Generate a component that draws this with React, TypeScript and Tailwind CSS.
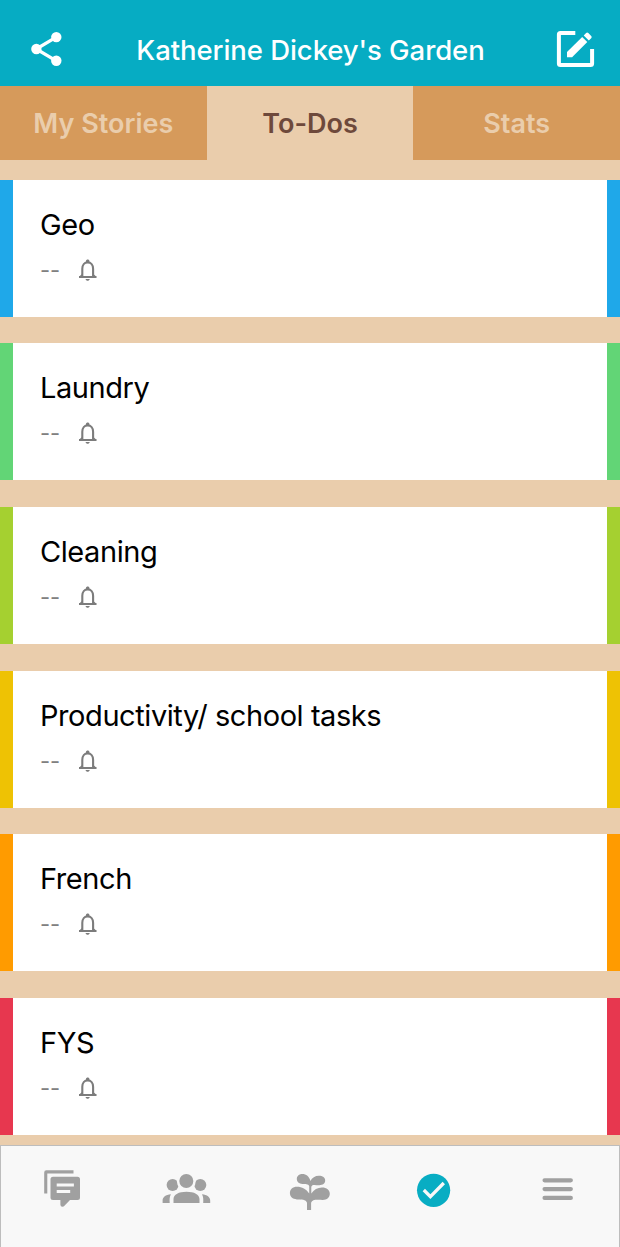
const todos = [
  { title: 'Geo', border: 'border-[#1fa8e9]' },
  { title: 'Laundry', border: 'border-[#62d576]' },
  { title: 'Cleaning', border: 'border-[#a5d030]' },
  { title: 'Productivity/ school tasks', border: 'border-[#eec204]' },
  { title: 'French', border: 'border-[#ff9b00]' },
  { title: 'FYS', border: 'border-[#e7374f]' },
];

function ShareIcon() {
  return (
    <svg className="h-[40px] w-[40px]" viewBox="26 29 40 40" fill="#fff">
      <path d="M56.3 37.1 36.2 49l20.1 11.8" fill="none" stroke="#fff" strokeWidth="3.3" />
      <circle cx="56.3" cy="37.1" r="5.2" />
      <circle cx="36.4" cy="49" r="5.2" />
      <circle cx="56.3" cy="60.7" r="5.2" />
    </svg>
  );
}

function EditIcon() {
  return (
    <svg className="h-[40px] w-[40px]" viewBox="555 29 40 40" fill="#fff">
      <path
        d="M575.3 32.9H560.5q-1.6 0-1.6 1.6v29q0 1.6 1.6 1.6h30q1.6 0 1.6-1.6V49"
        fill="none"
        stroke="#fff"
        strokeWidth="4"
      />
      <path d="M567 52.1 582.2 37l5.1 5.1L572.1 57.2H567z" />
      <path d="m583.7 35.5 2.4-2.4q1.1-1.1 2.2 0l2.9 2.9q1.1 1.1 0 2.2l-2.4 2.4z" />
    </svg>
  );
}

function BellIcon() {
  return (
    <svg className="h-[24px] w-[20px]" viewBox="78 258 20 24">
      <path
        d="M79 277h17.4M82.3 276.5v-7.7c0-3.8 2.2-6.4 5.4-6.4s5.4 2.6 5.4 6.4v7.7"
        fill="none"
        stroke="#7c7c7c"
        strokeWidth="2.1"
      />
      <path
        d="M86 262v-1c0-2 3.4-2 3.4 0v1zM82.3 273.7l-3.3 3v.8h3.5zM93.1 273.7l3.3 3v.8H93zM85.5 279h4.3c-.6 2.4-3.7 2.4-4.3 0z"
        fill="#7c7c7c"
      />
    </svg>
  );
}

function ChatIcon() {
  return (
    <svg className="h-[40px] w-[40px]" viewBox="42 1169 40 40" fill="#a0a0a0">
      <path d="M44.2 1193.5v-21q0-2.2 2.2-2.2h27.1v3.1H47.3v20.1z" />
      <path
        fillRule="evenodd"
        d="M53 1176.8h24.5q2.5 0 2.5 2.5v18.2q0 2.5-2.5 2.5H70l-5.3 5.5q-1 1.2-2.3 1.2-2 0-2-2v-4.7H53q-2.5 0-2.5-2.5v-18.2q0-2.5 2.5-2.5zM56.7 1183.6v3h17.2v-3zm0 6.4v3h13.5v-3z"
      />
    </svg>
  );
}

function PeopleIcon() {
  return (
    <svg className="h-[40px] w-[50px]" viewBox="161 1169 50 40" fill="#a0a0a0">
      <circle cx="172.6" cy="1185" r="6" />
      <circle cx="200.3" cy="1185" r="6" />
      <circle cx="186.3" cy="1181" r="7" stroke="#f8f8f8" strokeWidth="5" paintOrder="stroke" />
      <path d="M173.5 1202.9v-3.8c0-4.5 5.3-7.3 13-7.3s13 2.8 13 7.3v3.8zM162.6 1202.9v-2.3c0-3.6 3-6 8.3-6.4-1.4 2.3-1.4 5.6-1.2 8.7zM210.2 1202.9v-2.3c0-3.6-3-6-8.2-6.4 1.4 2.3 1.4 5.6 1.2 8.7z" />
    </svg>
  );
}

function PlantIcon() {
  return (
    <svg className="h-[40px] w-[44px]" viewBox="288 1172 44 40" fill="#a0a0a0">
      <path d="M310.4 1180.9c1.7-3.2 4.7-5.2 8.4-5.2 3.9 0 6.4 1.9 6.4 4.9 0 2.8-2.4 4.7-5.9 4.7-3.4 0-7-1.5-8 1.4v6.7c2.6-3.7 6.2-5.9 10.7-5.9 4.7 0 7.8 2.5 7.8 6.3 0 3.7-2.8 6.1-7 6.1-5.4 0-10.5-1-11.7 2.8v7.3h-4.1v-7.3c-.9-3.6-5.8-3.1-10.1-3.3-4.3-.2-7-2.6-7-6.3s2.6-6.3 7.2-6.3c4.9 0 9.2 2.4 12.1 6.7v-7.4c-1-2.6-3.8-1.9-6.8-2.2-3.5-.3-5.6-2-5.6-4.7 0-3 2.1-5.1 5.4-5.1 4.1 0 7 2.6 8.2 6.8z" />
    </svg>
  );
}

function CheckIcon() {
  return (
    <svg className="h-[40px] w-[40px]" viewBox="414 1170 40 40">
      <circle cx="433.6" cy="1190.3" r="16.6" fill="#08adc3" />
      <path d="m423.8 1190 6.6 6.6 13.4-13.6" fill="none" stroke="#f8f8f8" strokeWidth="3.3" />
    </svg>
  );
}

function MenuIcon() {
  return (
    <svg className="h-[40px] w-[40px]" viewBox="538 1169 40 40">
      <path
        d="M544.6 1180.3h26.2M544.6 1189.1h26.2M544.6 1197.9h26.2"
        stroke="#a0a0a0"
        strokeWidth="4.3"
        strokeLinecap="round"
      />
    </svg>
  );
}

export default function App() {
  return (
    <div className="flex h-[1247px] w-[620px] flex-col overflow-hidden bg-[#eacdac] font-['Inter',sans-serif] antialiased">
      <header className="flex h-[86px] shrink-0 items-center justify-between bg-[#06acc3] pt-[12px] pr-[25px] pl-[26px]">
        <ShareIcon />
        <h1 className="pt-px text-[27.5px] leading-[34px] font-medium tracking-[-0.07px] whitespace-nowrap text-white">
          Katherine Dickey's Garden
        </h1>
        <EditIcon />
      </header>

      <nav className="grid h-[74px] shrink-0 grid-cols-3 text-center text-[27px] leading-[72px] font-semibold">
        <span className="bg-[#d69a5b] pt-[2px] text-[#eacdac]">My Stories</span>
        <span className="pt-[2px] text-[#6e493b]">To-Dos</span>
        <span className="bg-[#d69a5b] pt-[2px] text-[#eacdac]">Stats</span>
      </nav>

      <main className="flex min-h-0 flex-1 flex-col gap-[26.6px] overflow-hidden pt-[19.6px]">
        {todos.map((todo) => (
          <article
            key={todo.title}
            className={`h-[137.1px] shrink-0 border-x-[13px] bg-white pt-[27px] pl-[27px] ${todo.border}`}
          >
            <h2 className="text-[29px] leading-[36px] tracking-[-0.43px] whitespace-nowrap text-black">
              {todo.title}
            </h2>
            <div className="mt-[15px] flex h-[24px] items-center gap-[17px] text-[#808080]">
              <span className="w-[21px] text-[22px] leading-[24px]">--</span>
              <BellIcon />
            </div>
          </article>
        ))}
      </main>

      <footer className="h-[102px] shrink-0 border-x border-t border-[#bdbdbd] bg-[#f8f8f8] pt-[23px]">
        <div className="-mx-px grid grid-cols-5 items-start justify-items-center">
          <ChatIcon />
          <PeopleIcon />
          <div className="pt-[3px]">
            <PlantIcon />
          </div>
          <div className="pt-px">
            <CheckIcon />
          </div>
          <MenuIcon />
        </div>
      </footer>
    </div>
  );
}
